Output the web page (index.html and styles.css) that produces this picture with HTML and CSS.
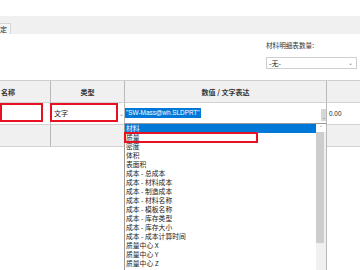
FILE: index.html
```html
<!DOCTYPE html>
<html lang="zh-CN">
<head>
<meta charset="utf-8">
<link rel="stylesheet" href="styles.css">
</head>
<body>
<div class="page">
  <div class="topband"></div>
  <div class="tabbar"><div class="tab">定</div></div>
  <div class="opts">
    <div class="opts-col">
      <div class="opts-label">材料明细表数量:</div>
      <div class="select"><span>-无-</span><span class="chev">⌄</span></div>
    </div>
  </div>
  <div class="table">
    <div class="cell head c1">名称</div>
    <div class="cell head c2">类型</div>
    <div class="cell head c3">数值 / 文字表达</div>
    <div class="cell head c4"></div>

    <div class="cell row1 c1"><div class="redbox rb1"></div></div>
    <div class="cell row1 c2"><div class="redbox rb2">文字</div><span class="arrow">⌄</span></div>
    <div class="cell row1 c3"><span class="sel">"SW-Mass@wh.SLDPRT"</span><span class="btn">⌄</span></div>
    <div class="cell row1 c4">0.00</div>

    <div class="cell row2 c1"></div>
    <div class="cell row2 c2"></div>
    <div class="cell row2 c3"></div>
    <div class="cell row2 c4"></div>
  </div>

  <div class="dropdown">
    <div class="list">
      <div class="item active">材料</div>
      <div class="item">质量</div>
      <div class="item">密度</div>
      <div class="item">体积</div>
      <div class="item">表面积</div>
      <div class="item">成本 - 总成本</div>
      <div class="item">成本 - 材料成本</div>
      <div class="item">成本 - 制造成本</div>
      <div class="item">成本 - 材料名称</div>
      <div class="item">成本 - 模板名称</div>
      <div class="item">成本 - 库存类型</div>
      <div class="item">成本 - 库存大小</div>
      <div class="item">成本 - 成本计算时间</div>
      <div class="item">质量中心 X</div>
      <div class="item">质量中心 Y</div>
      <div class="item">质量中心 Z</div>
      <div class="mark"></div>
    </div>
    <div class="scroll">
      <div class="up">˄</div>
      <div class="thumb"></div>
    </div>
  </div>
</div>
</body>
</html>
```

FILE: styles.css
```css
* { box-sizing: border-box; }
html, body { margin: 0; padding: 0; }
body {
  width: 360px;
  height: 270px;
  overflow: hidden;
  background: #ffffff;
  font-family: "Noto Sans", "Noto Sans CJK SC", sans-serif;
  font-size: 7px;
  color: #1a1a1a;
}
.page { position: relative; width: 360px; height: 270px; }
.topband { height: 16px; background: #ffffff; }
.tabbar {
  height: 18px;
  background: #f0f0f0;
  display: flex;
  align-items: flex-end;
}
.tab {
  height: 11px;
  line-height: 10px;
  padding: 0 3px 0 0;
  background: #f7f7f7;
  border-right: 1px solid #d6d6d6;
  border-top: 1px solid #d6d6d6;
  font-family: "Noto Sans CJK SC", sans-serif;
}
.opts {
  height: 46px;
  display: flex;
  justify-content: flex-end;
  padding-right: 3px;
}
.opts-col { width: 91px; padding-top: 7px; }
.opts-label {
  height: 9px;
  line-height: 9px;
  font-family: "Noto Sans CJK SC", sans-serif;
  font-size: 6.6px;
  color: #333;
}
.select {
  margin-top: 7px;
  height: 12px;
  border: 1px solid #cfcfcf;
  display: flex;
  align-items: center;
  justify-content: space-between;
  padding: 0 3px 0 2px;
  font-family: "Noto Sans CJK SC", sans-serif;
  font-size: 7px;
  line-height: 10px;
}
.chev { font-size: 6px; color: #777; }

.table {
  display: grid;
  grid-template-columns: 51px 74px 202px 33px;
  grid-auto-rows: 22px;
  border-top: 1px solid #cfcfcf;
}
.cell {
  border-right: 1px solid #b9b9b9;
  border-bottom: 1px solid #d2d2d2;
  display: flex;
  align-items: center;
  font-family: "Noto Sans CJK SC", sans-serif;
}
.c4 { border-right: none; }
.head {
  background: #f0f0f0;
  font-weight: bold;
  color: #333;
  justify-content: center;
  font-size: 7px;
}
.head.c1 { justify-content: flex-start; padding-left: 1px; }
.row1 { background: #ffffff; align-items: flex-start; }
.row2 { background: #f0f0f0; }
.redbox {
  border: 2px solid #e81123;
  height: 19px;
}
.rb1 { width: 43px; }
.rb2 {
  width: 68px;
  margin-left: -1px;
  padding-left: 2px;
  display: flex;
  align-items: center;
}
.arrow {
  margin: 6px 0 0 1px;
  font-size: 6px;
  color: #888;
}
.row1.c3 { padding-top: 5px; }
.sel {
  background: #0078d7;
  color: #ffffff;
  font-family: "Liberation Sans", sans-serif;
  font-size: 6.4px;
  line-height: 10px;
  padding: 0 1px 0 1px;
  height: 10px;
}
.btn {
  margin-left: auto;
  margin-top: 1px;
  width: 5px;
  height: 12px;
  background: #d6d6d6;
  color: #777;
  font-size: 5px;
  line-height: 16px;
  text-align: center;
  overflow: hidden;
}
.row1.c4 {
  align-items: center;
  padding-left: 2px;
  font-family: "Liberation Sans", sans-serif;
  font-size: 6.4px;
}

.dropdown {
  position: absolute;
  left: 124px;
  top: 123px;
  width: 203px;
  height: 160px;
  background: #ffffff;
  border: 1px solid #9a9a9a;
  border-right: 1px solid #b9b9b9;
  display: flex;
}
.list { position: relative; flex: 1; }
.item {
  height: 9px;
  line-height: 9px;
  padding-left: 1px;
  font-family: "Noto Sans CJK SC", sans-serif;
  font-size: 6.8px;
  white-space: nowrap;
  color: #1a1a1a;
}
.item.active { background: #0078d7; color: #ffffff; }
.mark {
  position: absolute;
  left: -1px;
  top: 8px;
  width: 134px;
  height: 11px;
  border: 2px solid #e81123;
}
.scroll {
  width: 10px;
  background: #f0f0f0;
  display: flex;
  flex-direction: column;
}
.up {
  height: 8px;
  background: #ffffff;
  color: #555;
  font-size: 7px;
  line-height: 9px;
  text-align: center;
}
.thumb {
  width: 8px;
  height: 111px;
  background: #cdcdcd;
}
```
